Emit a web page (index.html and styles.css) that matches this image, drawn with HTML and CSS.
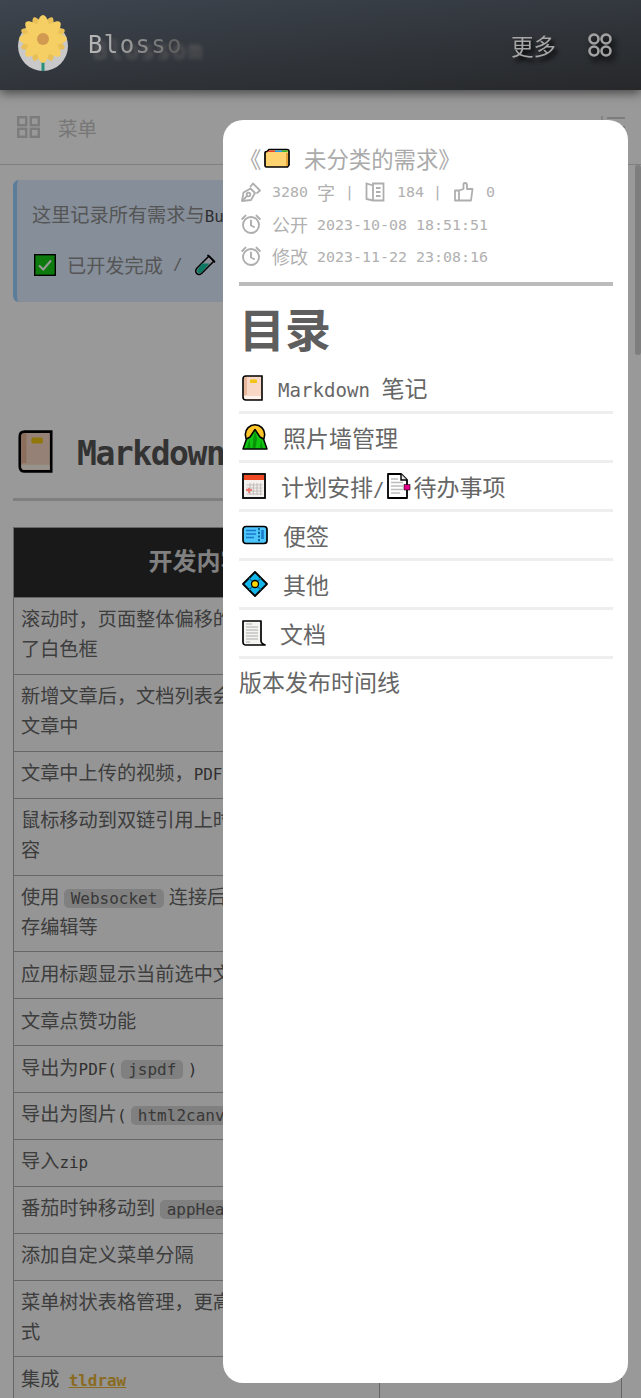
FILE: index.html
```html
<!DOCTYPE html>
<html lang="zh">
<head>
<meta charset="utf-8">
<title>Blossom</title>
<link rel="stylesheet" href="styles.css">
</head>
<body>
<svg class="defs" width="0" height="0">
  <defs>
    <symbol id="i-book" viewBox="0 0 21 26">
      <path d="M4 1H20V25H4Q1 25 1 22V4Q1 1 4 1Z" fill="#f8d7c4" stroke="#000" stroke-width="1.6"/>
      <path d="M2 3Q2 2 4 2H5V20H3L2 21Z" fill="#e9b79c"/>
      <path d="M2 21H19V24H4Q2 24 2 22Z" fill="#fdf3ec"/>
      <rect x="8" y="4.5" width="7" height="3.6" rx="1.2" fill="#f2c511"/>
    </symbol>
    <symbol id="i-clock" viewBox="0 0 20 20">
      <g fill="none" stroke="#aeaeae" stroke-width="1.9" stroke-linecap="round">
        <circle cx="10" cy="11" r="8"/>
        <path d="M10 6.5V11.5L13 13"/>
        <path d="M1.2 5 4.5 1.6M18.8 5 15.500 1.6"/>
      </g>
    </symbol>
  </defs>
</svg>

<header class="topbar">
  <div class="brand">
    <svg class="logo" viewBox="0 0 50 57" aria-hidden="true">
      <circle cx="25" cy="31" r="25" fill="#c9c9c9"/>
      <rect x="23.500" y="44" width="3" height="12" fill="#2a8f7a"/>
      <g fill="#e9bf58">
        <ellipse cx="25" cy="24" rx="6" ry="23.500" transform="rotate(22.5 25 24)"/>
        <ellipse cx="25" cy="24" rx="6" ry="23.500" transform="rotate(67.5 25 24)"/>
        <ellipse cx="25" cy="24" rx="6" ry="23.500" transform="rotate(112.5 25 24)"/>
        <ellipse cx="25" cy="24" rx="6" ry="23.500" transform="rotate(157.5 25 24)"/>
      </g>
      <g fill="#f5cf63">
        <ellipse cx="25" cy="24" rx="7.500" ry="24"/>
        <ellipse cx="25" cy="24" rx="7.500" ry="24" transform="rotate(45 25 24)"/>
        <ellipse cx="25" cy="24" rx="7.500" ry="24" transform="rotate(90 25 24)"/>
        <ellipse cx="25" cy="24" rx="7.500" ry="24" transform="rotate(135 25 24)"/>
      </g>
      <circle cx="25" cy="24" r="6" fill="#d19a50"/>
    </svg>
    <span class="brand-name"><span class="f1">B</span><span class="f2">l</span><span class="f3">o</span><span class="f4">s</span><span class="f5">s</span><span class="f6">o</span><span class="f7">m</span></span>
  </div>
  <div class="top-actions">
    <span class="more">更多</span>
    <svg class="cmd" viewBox="0 0 24 24" aria-hidden="true">
      <g fill="none" stroke="#a2a2a2" stroke-width="2.600">
        <rect x="1.500" y="1.500" width="9" height="9" rx="4.500"/>
        <rect x="13.500" y="1.500" width="9" height="9" rx="4.500"/>
        <rect x="1.500" y="13.500" width="9" height="9" rx="4.500"/>
        <rect x="13.500" y="13.500" width="9" height="9" rx="4.500"/>
      </g>
    </svg>
  </div>
</header>

<div class="subbar">
  <svg class="grid-icon" viewBox="0 0 23 22" aria-hidden="true">
    <g fill="none" stroke="#cfcfcf" stroke-width="2.400">
      <rect x="1.200" y="1.200" width="8" height="8"/>
      <rect x="13.800" y="1.200" width="8" height="8"/>
      <rect x="1.200" y="12.800" width="8" height="8"/>
      <rect x="13.800" y="12.800" width="8" height="8"/>
    </g>
  </svg>
  <span class="menu-label">菜单</span>
  <svg class="list-icon" viewBox="0 0 25 22" aria-hidden="true">
    <path d="M7 2H25M7 11H25M7 20H25" stroke="#cfcfcf" stroke-width="2"/>
    <path d="M2 0V5M2 8H5M2 17H5" stroke="#cfcfcf" stroke-width="1.400"/>
  </svg>
</div>

<main class="content">
  <section class="note">
    <p class="note-line">这里记录所有需求与<span class="la strong">Bug</span></p>
    <p class="note-line note-legend">
      <svg class="check" viewBox="0 0 22 22" aria-hidden="true">
        <rect x=".7" y=".7" width="20.600" height="20.600" fill="#16cc16" stroke="#000" stroke-width="1.400"/>
        <path d="M5 11.500 9.300 15.500 17 6.500" fill="none" stroke="#fff" stroke-width="2"/>
      </svg>
      <span class="legend-text">已开发完成</span>
      <span class="slash la">/</span>
      <svg class="tube" viewBox="0 0 22 22" aria-hidden="true">
        <path d="M15 2 20 7 7.500 19.500Q5 21.500 2.600 19.400 .7 17 2.800 14.200Z" fill="#eef" stroke="#000" stroke-width="1.500" stroke-linejoin="round"/>
        <path d="M8 9.500 15.500 9.500 7.500 18.500Q5.500 20 3.700 18.400 2.500 17 3.800 15Z" fill="#14c8a4"/>
        <path d="M13.500 .9 21 8.400" stroke="#000" stroke-width="1.500"/>
      </svg>
    </p>
  </section>

  <h2 class="section-title">
    <svg class="title-book"><use href="#i-book"/></svg>
    <span class="section-name">Markdown</span>
  </h2>

  <table class="dev-table">
    <colgroup><col class="col-main"><col></colgroup>
    <thead><tr><th>开发内容</th><th></th></tr></thead>
    <tbody>
      <tr><td>滚动时，页面整体偏移的<br>了白色框</td><td></td></tr>
      <tr><td>新增文章后，文档列表会<br>文章中</td><td></td></tr>
      <tr><td>文章中上传的视频，<span class="la strong">PDF</span></td><td></td></tr>
      <tr><td>鼠标移动到双链引用上时<br>容</td><td></td></tr>
      <tr><td>使用 <code>Websocket</code> 连接后<br>存编辑等</td><td></td></tr>
      <tr><td>应用标题显示当前选中文</td><td></td></tr>
      <tr><td>文章点赞功能</td><td></td></tr>
      <tr><td>导出为<span class="la strong">PDF(</span> <code>jspdf</code> <span class="la strong">)</span></td><td></td></tr>
      <tr><td>导出为图片<span class="la strong">(</span> <code>html2canvas</code> <span class="la strong">)</span></td><td></td></tr>
      <tr><td>导入<span class="la strong">zip</span></td><td></td></tr>
      <tr><td>番茄时钟移动到 <code>appHeader</code></td><td></td></tr>
      <tr><td>添加自定义菜单分隔</td><td></td></tr>
      <tr><td>菜单树状表格管理，更高<br>式</td><td></td></tr>
      <tr><td>集成 <a class="ext la" href="#">tldraw</a></td><td></td></tr>
    </tbody>
  </table>
</main>
<div class="thumb"></div>

<div class="scrim"></div>

<aside class="drawer">
  <div class="doc-title">
    <span class="quote">《</span>
    <svg class="folder" viewBox="0 0 26 20" aria-hidden="true">
      <path d="M3 3.500 L5 1.500H23Q25 1.500 25 3.500V17L23.500 19H2.500Q1 19 1 17.500V5Q1 3.500 3 3.500Z" fill="#ffd470" stroke="#000" stroke-width="1.700"/>
      <path d="M23 5V18" stroke="#e8a63a" stroke-width="2"/>
      <path d="M3 4 5.500 2.400H11V4Z" fill="#e8432e"/>
      <path d="M11 2.400H18V4H11Z" fill="#2a9de8"/>
      <path d="M18 2.400H23.500V4H18Z" fill="#2fb52f"/>
    </svg>
    <span class="doc-name">未分类的需求》</span>
  </div>
  <div class="meta">
    <svg class="meta-icon" viewBox="0 0 20 20" aria-hidden="true">
      <g fill="none" stroke="#aeaeae" stroke-width="1.800" stroke-linejoin="round" stroke-linecap="round">
        <path d="M1 19 2.500 10.500 9.500 6.500 14 11 10 18Z"/>
        <path d="M9.500 4.500 12 1.500 19 8.500 16 11"/>
        <circle cx="7.500" cy="12.500" r="1.800"/>
        <path d="M1.500 18.500 6 14"/>
      </g>
    </svg>
    <span class="meta-num la m-words">3280</span><span class="meta-cjk">字</span><span class="meta-sep la">|</span>
    <svg class="meta-icon m-read" viewBox="0 0 20 20" aria-hidden="true">
      <g fill="none" stroke="#aeaeae" stroke-width="1.800">
        <path d="M8 3.500 1.500 1.500V17L8 18.500H18.500V1.500H8ZM8 1.500V18.500"/>
        <path d="M11 6H15.500M11 10H15.500M11 14H15.500"/>
      </g>
    </svg>
    <span class="meta-num la m-read-n">184</span><span class="meta-sep la sep-b">|</span>
    <svg class="meta-icon m-like" viewBox="0 0 20 20" aria-hidden="true">
      <path d="M1 8.500H5V18.500H1ZM5 8.500 9.500 7V2Q9.500 1 11 1 13 1 13 3.500V7H18.500L17 18.500H5" fill="none" stroke="#aeaeae" stroke-width="1.800" stroke-linejoin="round"/>
    </svg>
    <span class="meta-num la m-read-n">0</span>
  </div>
  <div class="meta">
    <svg class="meta-icon"><use href="#i-clock"/></svg>
    <span class="meta-cjk-first">公开</span><span class="meta-date la">2023-10-08 18:51:51</span>
  </div>
  <div class="meta">
    <svg class="meta-icon"><use href="#i-clock"/></svg>
    <span class="meta-cjk-first">修改</span><span class="meta-date la">2023-11-22 23:08:16</span>
  </div>
  <div class="doc-rule"></div>
  <h1 class="toc-title">目录</h1>
  <ul class="toc">
    <li class="toc-item">
      <svg class="ti ti-book"><use href="#i-book"/></svg>
      <span class="t-md"><span class="la">Markdown </span>笔记</span>
    </li>
    <li class="toc-item">
      <svg class="ti ti-wide" viewBox="0 0 26 26" aria-hidden="true">
        <circle cx="13" cy="10.500" r="9.700" fill="#ffc629" stroke="#000" stroke-width="1.600"/>
        <path d="M1 25 4.500 15 8 13 13 5.500 18 13 21.500 15 25 25Z" fill="#12c312" stroke="#000" stroke-width="1.500" stroke-linejoin="round"/>
        <path d="M13 7 15 15 13.500 24 10.500 24 11.500 14ZM5 24 7.500 15 8.500 24ZM19 16 21 24 18 24Z" fill="#079407"/>
      </svg>
      <span class="t-wide">照片墙管理</span>
    </li>
    <li class="toc-item">
      <svg class="ti ti-cal" viewBox="0 0 24 26" aria-hidden="true">
        <rect x="1" y="1" width="22" height="24" fill="#f4f1ee" stroke="#000" stroke-width="1.800"/>
        <rect x="2" y="2" width="20" height="5" fill="#f04a25"/>
        <path d="M8 10V22M11.500 10V22M15 10V22M18.500 10V22M4.500 12H20.500M4.500 15H20.500M4.500 18H20.500M4.500 21H20.500" stroke="#c4c0bd" stroke-width="1.200"/>
        <path d="M4 17H10M7 15V20" stroke="#ec7a72" stroke-width="1.800"/>
      </svg>
      <span class="t-plan">计划安排<span class="la">/</span></span>
      <svg class="ti-doc" viewBox="0 0 24 26" aria-hidden="true">
        <path d="M1 1H14L20 7V25H1Z" fill="#fff" stroke="#000" stroke-width="1.800" stroke-linejoin="round"/>
        <path d="M14 1V7H20" fill="#e5e5e5" stroke="#000" stroke-width="1.400"/>
        <path d="M4 6H11M4 9.500H16M4 13H16M4 16.500H16M4 20H13" stroke="#bdbdbd" stroke-width="1.400"/>
        <path d="M17 11.500H23V17H17Z" fill="#e6008a" stroke="#000" stroke-width=".6"/>
      </svg>
      <span class="t-todo">待办事项</span>
    </li>
    <li class="toc-item">
      <svg class="ti ti-wide" viewBox="0 0 26 20" aria-hidden="true">
        <rect x="1" y="1.500" width="24" height="17" rx="3" fill="#4cc6fb" stroke="#000" stroke-width="1.700"/>
        <path d="M4 5.500H14M4 9H14M4 12.500H12" stroke="#1879c9" stroke-width="1.500"/>
        <path d="M17 3V17" stroke="#0d5d94" stroke-width="1.800" stroke-dasharray="2.200 1.500"/>
        <path d="M20.500 5V14" stroke="#1879c9" stroke-width="2.500"/>
      </svg>
      <span class="t-wide">便签</span>
    </li>
    <li class="toc-item">
      <svg class="ti ti-wide" viewBox="0 0 26 26" aria-hidden="true">
        <path d="M13 1 25 13 13 25 1 13Z" fill="#14b7ea" stroke="#000" stroke-width="1.800" stroke-linejoin="round"/>
        <path d="M7 7 19 19M19 7 7 19" stroke="#0a6c8e" stroke-width="1.200"/>
        <circle cx="13" cy="13" r="3.500" fill="#ffd800" stroke="#000" stroke-width="1.300"/>
      </svg>
      <span class="t-wide">其他</span>
    </li>
    <li class="toc-item">
      <svg class="ti ti-scroll" viewBox="0 0 24 26" aria-hidden="true">
        <path d="M1 1H19V21Q19 23 21 24L23 25H4Q1 25 1 22Z" fill="#f4f4f2" stroke="#000" stroke-width="1.700" stroke-linejoin="round"/>
        <path d="M4 4H10M4 7H16M4 10H16M4 13H16M4 16H16M4 19H16M4 22H8" stroke="#c2c2c2" stroke-width="1.300"/>
      </svg>
      <span class="t-doc">文档</span>
    </li>
    <li class="toc-item toc-plain">版本发布时间线</li>
  </ul>
</aside>
</body>
</html>
```
FILE: styles.css
```css
* { box-sizing: border-box; }
html, body { margin: 0; padding: 0; }
body {
  width: 641px;
  height: 1398px;
  overflow: hidden;
  background: #fff;
  font-family: "Noto Sans CJK SC", "DejaVu Sans", sans-serif;
  font-size: 19.2px;
  color: #666;
}
.defs { position: absolute; }
.la { font-family: "DejaVu Sans Mono", monospace; font-size: .83em; line-height: 1; }
.strong { color: #505050; }

.topbar {
  position: relative;
  z-index: 3;
  height: 90px;
  display: flex;
  align-items: center;
  justify-content: space-between;
  padding: 0 29px 0 18px;
  background: linear-gradient(174deg, #3e454f 0%, #26282a 100%);
  box-shadow: 0 3px 10px rgba(0, 0, 0, .55);
}
.brand { display: flex; align-items: center; }
.logo { width: 50px; height: 57px; display: block; margin-bottom: 3px; }
.brand-name {
  margin-left: 20px;
  font-family: "DejaVu Sans Mono", monospace;
  font-size: 24px;
  letter-spacing: 1.35px;
  text-shadow: 5px 6px 4px #5e5e5e;
}
.f1 { color: #b4b4b4; }
.f2 { color: #a8a8a8; }
.f3 { color: #9a9a9a; }
.f4 { color: #8a8a8a; }
.f5 { color: #7a7a7a; }
.f6 { color: #636363; }
.f7 { color: transparent; }

.top-actions { display: flex; align-items: center; gap: 32px; }
.more {
  font-size: 22.5px;
  color: #a6a6a6;
  text-shadow: 3px 4px 4px #000;
}
.cmd { width: 24px; height: 24px; filter: drop-shadow(3px 4px 3px #000); }

.subbar {
  height: 75px;
  display: flex;
  align-items: center;
  padding: 0 16px 0 17px;
  border-bottom: 1px solid #d6d6d6;
}
.grid-icon { width: 23px; height: 22px; }
.menu-label { margin-left: 18px; font-size: 19.5px; color: #c6c6c6; }
.list-icon { width: 25px; height: 22px; margin-left: auto; }

.content { height: 1233px; overflow: hidden; padding: 15px 19px 0 13px; }

.note {
  height: 122px;
  padding: 18px 12px 0 15px;
  background: #deedff;
  border-left: 4px solid #98d0ff;
  border-radius: 6px;
  color: #8e8e8e;
}
.note-line { margin: 0; height: 32px; line-height: 32px; white-space: nowrap; }
.note-legend { display: flex; align-items: center; margin-top: 19px; }
.check { width: 22px; height: 22px; margin-left: 2px; }
.legend-text { margin-left: 11px; }
.slash { margin-left: 10px; }
.tube { width: 22px; height: 22px; margin-left: 11px; }

.section-title {
  display: flex;
  align-items: flex-start;
  height: 79px;
  margin: 120px 0 26px;
  padding: 8px 0 0 5px;
  border-bottom: 3px solid #d4d4d4;
  font-weight: 700;
  color: #555;
  white-space: nowrap;
}
.title-book { width: 35px; height: 43px; flex: none; }
.section-name {
  margin: 2px 0 0 24px;
  font-family: "DejaVu Sans Mono", monospace;
  font-size: 33px;
  line-height: 44px;
  letter-spacing: -1.45px;
}

.dev-table {
  width: 609px;
  table-layout: fixed;
  border-collapse: collapse;
  background: #f8f8f8;
  line-height: 30px;
}
.col-main { width: 366px; }
.dev-table th, .dev-table td {
  border: 1px solid #aaa;
  padding: 5.45px 8px 10.45px 7px;
  text-align: left;
  white-space: nowrap;
  overflow: hidden;
}
.dev-table th {
  height: 70px;
  padding: 5px 8px 10px;
  background: #2b2b2b;
  color: #d5d5d5;
  font-size: 24px;
  font-weight: 700;
  text-align: center;
}
code {
  display: inline-block;
  font-family: "DejaVu Sans Mono", monospace;
  font-size: 16px;
  line-height: 19px;
  padding: 0 7px;
  border-radius: 5px;
  background: #d5d5d5;
  color: #606060;
}
.ext { margin-left: 5px; color: #e6b235; font-weight: 700; }

.thumb {
  position: absolute;
  left: 635px;
  top: 165px;
  width: 6px;
  height: 190px;
  border-radius: 3px;
  background: #d2d2d2;
}

.scrim {
  position: fixed;
  inset: 0;
  z-index: 2;
  background: rgba(0, 0, 0, .4);
}

.drawer {
  position: fixed;
  z-index: 4;
  left: 223px;
  top: 120px;
  width: 405px;
  height: 1263px;
  padding: 22px 15px 0 16px;
  background: #fff;
  border-radius: 20px;
  color: #666;
}

.doc-title {
  display: flex;
  align-items: center;
  height: 34px;
  padding-bottom: 2px;
  font-size: 22.4px;
  color: #aaa;
  white-space: nowrap;
}
.quote { width: 25px; flex: none; }
.folder { width: 26px; height: 20px; flex: none; }
.doc-name { margin-left: 14px; }

.meta {
  display: flex;
  align-items: center;
  height: 32px;
  padding: 0 0 1px 2px;
  font-size: 18px;
  color: #b0b0b0;
  white-space: nowrap;
}
.meta .la { padding-top: 2px; }
.meta .meta-date { padding-top: 3px; }
.meta-icon { width: 20px; height: 20px; flex: none; }
.meta-num { margin-left: 11px; }
.m-read-n { margin-left: 12px; }
.meta-cjk { margin-left: 9px; }
.meta-sep { margin-left: 10px; }
.sep-b { margin-left: 9px; }
.m-read { margin-left: 11px; }
.m-like { margin-left: 12px; }
.meta-cjk-first { margin-left: 11px; }
.meta-date { margin-left: 9px; }

.doc-rule { height: 4px; margin-top: 10px; background: #bbb; }
.toc-title {
  margin: 11px 0 8px 0;
  font-size: 46px;
  line-height: 60px;
  font-weight: 700;
  color: #5e5e5e;
}
.toc { list-style: none; margin: 0; padding: 0; font-size: 23px; }
.toc-item {
  display: flex;
  align-items: center;
  height: 49px;
  padding-left: 3px;
  border-bottom: 3px solid #eee;
  white-space: nowrap;
}
.toc-plain { border-bottom: 0; padding: 0 0 3px 0; height: 46px; }
.ti { flex: none; }
.ti-book { width: 21px; height: 26px; }
.ti-wide { width: 26px; height: 26px; }
.ti-cal { width: 24px; height: 26px; }
.ti-scroll { width: 24px; height: 26px; }
.ti-doc { width: 24px; height: 26px; flex: none; margin-left: 2px; }
.t-md { margin-left: 15px; padding-bottom: 2px; }
.t-wide { margin-left: 15px; }
.t-plan { margin-left: 15px; }
.t-todo { margin-left: 3px; }
.t-doc { margin-left: 14px; }
```
